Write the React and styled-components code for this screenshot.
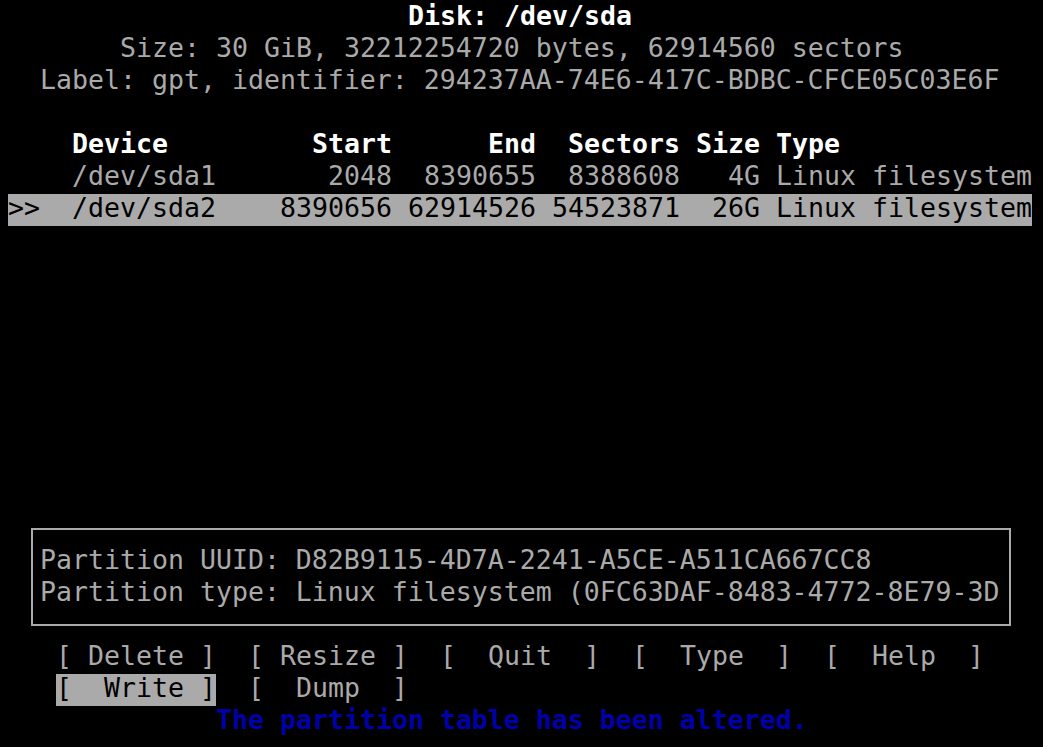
import React from "react";
import styled, { createGlobalStyle } from "styled-components";

const CELL_W = 16;
const CELL_H = 32;

const GlobalStyle = createGlobalStyle`
  html, body {
    margin: 0;
    padding: 0;
    background: #000;
  }
  body {
    font-family: "DejaVu Sans Mono", "Liberation Mono", monospace;
  }
`;

const Screen = styled.div`
  width: 1024px;
  height: 745px;
  padding: 2px 0 0 8px;
  background: #000;
  color: #aaaaaa;
  font-family: "DejaVu Sans Mono", "Liberation Mono", monospace;
  font-size: 26.57px;
  line-height: 28px;
  display: flex;
  flex-direction: column;
`;

const Line = styled.div`
  height: ${CELL_H}px;
  flex: none;
  white-space: pre;
  padding-left: ${(p) => (p.$indent || 0) * CELL_W}px;
  color: ${(p) => (p.$tone === "bright" ? "#ffffff" : p.$tone === "blue" ? "#0000aa" : "#aaaaaa")};
  font-weight: ${(p) => (p.$bold ? "bold" : "normal")};
`;

const Spacer = styled.div`
  height: ${(p) => p.$rows * CELL_H}px;
  flex: none;
`;

const TableRow = styled.div`
  height: ${CELL_H}px;
  flex: none;
  display: grid;
  grid-template-columns: 64px 144px 176px 144px 144px 80px 16px 256px;
  white-space: pre;
  background: ${(p) => (p.$selected ? "#aaaaaa" : "transparent")};
  color: ${(p) => (p.$selected ? "#000000" : p.$header ? "#ffffff" : "#aaaaaa")};
  font-weight: ${(p) => (p.$header ? "bold" : "normal")};
`;

const Cell = styled.span`
  text-align: ${(p) => (p.$right ? "right" : "left")};
`;

const Frame = styled.div`
  flex: none;
  margin: 14px 0 16px 23px;
  border: 2px solid #aaaaaa;
  padding: 16px 0 14px 7px;
  box-sizing: border-box;
  width: 980px;
`;

const FrameLine = styled.div`
  height: ${CELL_H}px;
  white-space: pre;
`;

const ButtonRow = styled.div`
  height: ${CELL_H}px;
  flex: none;
  display: flex;
  gap: ${2 * CELL_W}px;
  padding-left: ${3 * CELL_W}px;
`;

const Button = styled.span`
  width: ${10 * CELL_W}px;
  height: ${CELL_H}px;
  white-space: pre;
  background: ${(p) => (p.$selected ? "#aaaaaa" : "transparent")};
  color: ${(p) => (p.$selected ? "#000000" : "#aaaaaa")};
`;

const partitions = [
  {
    dev: "/dev/sda1",
    start: "2048",
    end: "8390655",
    sectors: "8388608",
    size: "4G",
    type: "Linux filesystem",
  },
  {
    dev: "/dev/sda2",
    start: "8390656",
    end: "62914526",
    sectors: "54523871",
    size: "26G",
    type: "Linux filesystem",
    selected: true,
  },
];

const buttonsTop = [
  "[ Delete ]",
  "[ Resize ]",
  "[  Quit  ]",
  "[  Type  ]",
  "[  Help  ]",
];
const buttonsBottom = [
  { label: "[  Write ]", selected: true },
  { label: "[  Dump  ]" },
];

export default function App() {
  return (
    <>
      <GlobalStyle />
      <Screen>
        <Line $indent={25} $tone="bright" $bold>
          Disk: /dev/sda
        </Line>
        <Line $indent={7}>Size: 30 GiB, 32212254720 bytes, 62914560 sectors</Line>
        <Line $indent={2}>
          Label: gpt, identifier: 294237AA-74E6-417C-BDBC-CFCE05C03E6F
        </Line>
        <Spacer $rows={1} />
        <TableRow $header>
          <Cell />
          <Cell>Device</Cell>
          <Cell $right>Start</Cell>
          <Cell $right>End</Cell>
          <Cell $right>Sectors</Cell>
          <Cell $right>Size</Cell>
          <Cell />
          <Cell>Type</Cell>
        </TableRow>
        {partitions.map((p) => (
          <TableRow key={p.dev} $selected={p.selected}>
            <Cell>{p.selected ? ">>" : ""}</Cell>
            <Cell>{p.dev}</Cell>
            <Cell $right>{p.start}</Cell>
            <Cell $right>{p.end}</Cell>
            <Cell $right>{p.sectors}</Cell>
            <Cell $right>{p.size}</Cell>
            <Cell />
            <Cell>{p.type}</Cell>
          </TableRow>
        ))}
        <Spacer $rows={9} />
        <Frame>
          <FrameLine>Partition UUID: D82B9115-4D7A-2241-A5CE-A511CA667CC8</FrameLine>
          <FrameLine>
            Partition type: Linux filesystem (0FC63DAF-8483-4772-8E79-3D
          </FrameLine>
        </Frame>
        <ButtonRow>
          {buttonsTop.map((b) => (
            <Button key={b}>{b}</Button>
          ))}
        </ButtonRow>
        <ButtonRow>
          {buttonsBottom.map((b) => (
            <Button key={b.label} $selected={b.selected}>
              {b.label}
            </Button>
          ))}
        </ButtonRow>
        <Line $indent={13} $tone="blue" $bold>
          The partition table has been altered.
        </Line>
      </Screen>
    </>
  );
}
